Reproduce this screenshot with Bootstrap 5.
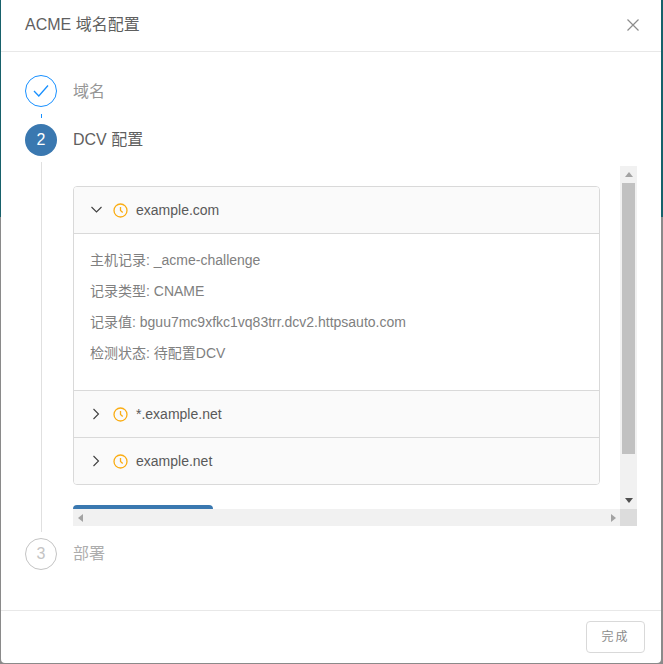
<!DOCTYPE html>
<html lang="zh">
<head>
<meta charset="utf-8">
<title>ACME 域名配置</title>
<link rel="stylesheet" href="https://cdn.jsdelivr.net/npm/bootstrap@5.3.0/dist/css/bootstrap.min.css">
<style>
html,body{height:664px;overflow:hidden}
body{background:linear-gradient(#17616b 0,#17616b 217px,#8a8a8a 217px);font-family:"Liberation Sans","Noto Sans CJK SC",sans-serif;font-size:14px;color:#595959;padding:0 2px 1px 1px}
.dlg{height:663px;border:0;border-radius:0 0 4px 4px;color:#595959;background:#fff}
.dlg .modal-header{height:52px;padding:0 24px 2px;border-bottom:1px solid #e8e8e8;flex-shrink:0}
.dlg-title{font-size:16px;font-weight:400;color:#5f5f5f;margin:0;line-height:24px}
.dlg-close{width:30px;height:30px;background:none;border:0;padding:0;margin-right:-11px}
.dlg-body{padding:23px 24px 0;flex:1 1 auto;min-height:0}
.rail{width:32px;flex:none}
.dot{width:32px;height:32px;border-radius:50%;font-size:16px;line-height:1}
.dot-done{border:1px solid #1890ff}
.dot-now{background:#3a78b0;color:#fff}
.dot-next{border:1px solid #c4c4c4;color:#c4c4c4}
.tail{width:1px;background:#e0e0e0;margin:6px auto}
.tail-short{height:4px;background:#1890ff;margin:7px auto 6px}
.step-name{font-size:16px;line-height:32px;color:#969696}
.step-name.low{padding-top:1px}
.step-now{color:#5f5f5f}
.step-off{color:#adadad}
.step-one{height:49px}
.step-two{height:414px}
.pane{display:grid;grid-template-columns:547px 17px;grid-template-rows:343px 17px;margin-top:10px;width:564px}
.view{overflow:hidden;padding-top:20px}
.zone{width:527px;border:1px solid #d9d9d9;border-radius:4px;overflow:hidden;color:#595959}
.zone-head{height:47px;background:#fafafa;padding:0 16px;gap:8px;color:#595959;border-top:1px solid #d9d9d9}
.zone-head.first{border-top:0;height:46px}
.zone-head .chev{margin-right:1px}
.zone-body{border-top:1px solid #d9d9d9;padding:11px 16px 21px;height:157px}
.zone-body p{margin:0;line-height:31px;color:#808080}
.cta{width:140px;height:32px;background:#3a78b0;border:0;border-radius:4px;margin-top:20px;display:block}
.vbar{background:#f1f1f1;padding:0 2px}
.hbar{background:#f1f1f1;padding:0 5px}
.corner{background:#dcdcdc}
.thumb{height:271px;background:#c1c1c1;width:13px}
.ab{height:17px;flex:none}
.done-btn{width:59px;height:32px;padding:0;background:#fff;border:1px solid #d9d9d9;border-radius:4px;color:#8c8c8c;font-size:12px;letter-spacing:2px}
.dlg .modal-footer{height:53px;padding:0 16px;border-top:1px solid #e8e8e8;flex-shrink:0}
.dlg .modal-footer>*{margin:0}
</style>
</head>
<body>
<div class="modal-content dlg">
  <div class="modal-header">
    <h5 class="dlg-title">ACME 域名配置</h5>
    <button type="button" class="dlg-close d-flex align-items-center justify-content-center" aria-label="Close">
      <svg width="14" height="14" viewBox="0 0 14 14" fill="none" stroke="#8c8c8c" stroke-width="1.2"><path d="M1.5 1.5 12.5 12.5M12.5 1.5 1.5 12.5"/></svg>
    </button>
  </div>
  <div class="dlg-body">
    <div class="d-flex gap-3 step-one">
      <div class="rail d-flex flex-column">
        <div class="dot dot-done d-flex align-items-center justify-content-center">
          <svg width="16" height="14" viewBox="0 0 16 14" fill="none" stroke="#1890ff" stroke-width="1.3"><path d="M1 7 5.8 12 15 1.5"/></svg>
        </div>
        <div class="tail tail-short"></div>
      </div>
      <div class="step-name low">域名</div>
    </div>
    <div class="d-flex gap-3 step-two">
      <div class="rail d-flex flex-column">
        <div class="dot dot-now d-flex align-items-center justify-content-center flex-none">2</div>
        <div class="tail flex-grow-1"></div>
      </div>
      <div>
        <div class="step-name step-now">DCV 配置</div>
        <div class="pane">
          <div class="view">
            <div class="zone">
              <div class="zone-head first d-flex align-items-center">
                <svg width="14" height="14" viewBox="0 0 14 14" fill="none" stroke="#404040" stroke-width="1.1" class="chev"><path d="M1.5 4 6.5 9 11.5 4"/></svg>
                <svg width="15" height="15" viewBox="0 0 15 15" fill="none" stroke="#faad14" stroke-width="1.3"><circle cx="7.5" cy="7.5" r="6.5"/><path d="M7.5 4v3.5l2.2 2"/></svg>
                <span>example.com</span>
              </div>
              <div class="zone-body">
                <p>主机记录: _acme-challenge</p>
                <p>记录类型: CNAME</p>
                <p>记录值: bguu7mc9xfkc1vq83trr.dcv2.httpsauto.com</p>
                <p>检测状态: 待配置DCV</p>
              </div>
              <div class="zone-head d-flex align-items-center">
                <svg width="14" height="14" viewBox="0 0 14 14" fill="none" stroke="#404040" stroke-width="1.1" class="chev"><path d="M3.5 2 8.5 7 3.5 12"/></svg>
                <svg width="15" height="15" viewBox="0 0 15 15" fill="none" stroke="#faad14" stroke-width="1.3"><circle cx="7.5" cy="7.5" r="6.5"/><path d="M7.5 4v3.5l2.2 2"/></svg>
                <span>*.example.net</span>
              </div>
              <div class="zone-head d-flex align-items-center">
                <svg width="14" height="14" viewBox="0 0 14 14" fill="none" stroke="#404040" stroke-width="1.1" class="chev"><path d="M3.5 2 8.5 7 3.5 12"/></svg>
                <svg width="15" height="15" viewBox="0 0 15 15" fill="none" stroke="#faad14" stroke-width="1.3"><circle cx="7.5" cy="7.5" r="6.5"/><path d="M7.5 4v3.5l2.2 2"/></svg>
                <span>example.net</span>
              </div>
            </div>
            <div class="cta"></div>
          </div>
          <div class="vbar d-flex flex-column align-items-center">
            <div class="ab d-flex align-items-center justify-content-center"><svg width="8" height="5" viewBox="0 0 8 5"><path d="M4 0 8 5H0Z" fill="#a3a3a3"/></svg></div>
            <div class="thumb"></div>
            <div class="flex-grow-1"></div>
            <div class="ab d-flex align-items-center justify-content-center"><svg width="8" height="5" viewBox="0 0 8 5"><path d="M0 0H8L4 5Z" fill="#505050"/></svg></div>
          </div>
          <div class="hbar d-flex align-items-center justify-content-between">
            <svg width="5" height="8" viewBox="0 0 5 8"><path d="M5 0V8L0 4Z" fill="#a3a3a3"/></svg>
            <svg width="5" height="8" viewBox="0 0 5 8" style="margin-right:-1px"><path d="M0 0V8L5 4Z" fill="#a3a3a3"/></svg>
          </div>
          <div class="corner"></div>
        </div>
      </div>
    </div>
    <div class="d-flex gap-3">
      <div class="rail"><div class="dot dot-next d-flex align-items-center justify-content-center">3</div></div>
      <div class="step-name step-off">部署</div>
    </div>
  </div>
  <div class="modal-footer">
    <button type="button" class="btn done-btn">完成</button>
  </div>
</div>
<script src="https://cdn.jsdelivr.net/npm/bootstrap@5.3.0/dist/js/bootstrap.bundle.min.js"></script>
</body>
</html>
